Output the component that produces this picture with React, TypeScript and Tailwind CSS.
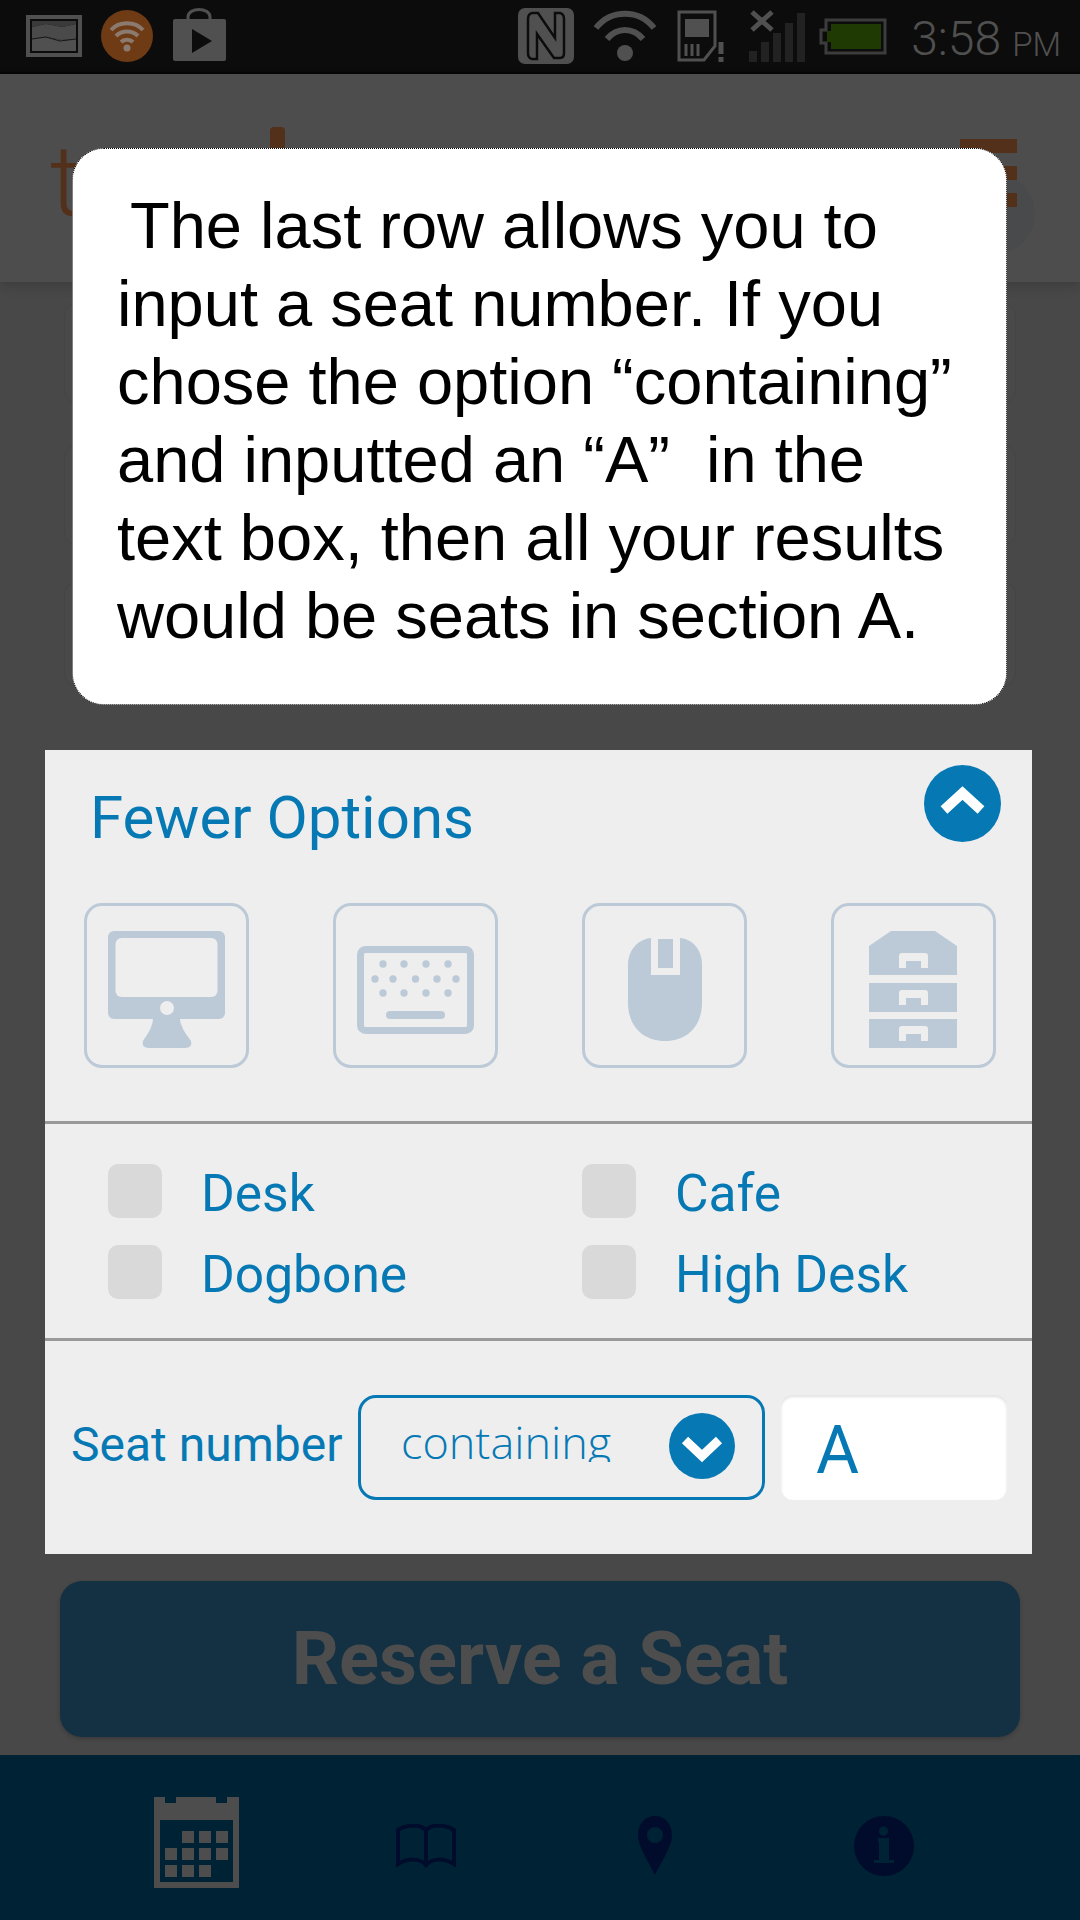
const ICON = "#bccad8";
const PANEL = "#eeeeee";
const NAV = "#002235";
const DARK = "#010c2c";
const GREY = "#505050";

function ChartIcon() {
  return (
    <svg width="56" height="42" viewBox="0 0 56 42">
      <rect x="2" y="2" width="52" height="38" fill="#0c0c0c" stroke={GREY} strokeWidth="4" />
      <path d="M6 6H50V9L36 12L20 9L6 12Z" fill="#3a3a3a" />
      <path d="M6 12L20 9L36 12L50 9V24L36 25L20 22L6 24Z" fill="#4a4a4a" />
      <path d="M6 24L20 22L36 25L50 24V36H6Z" fill={GREY} />
      <path d="M6 24L20 22L34 26L50 24" fill="none" stroke="#161616" strokeWidth="1" />
    </svg>
  );
}

function FeedIcon() {
  return (
    <svg width="52" height="52" viewBox="0 0 52 52">
      <circle cx="26" cy="26" r="26" fill="#6f3b14" />
      <g fill="none" stroke="#8a7a70" strokeWidth="4">
        <path d="M10 20C18 11 34 11 42 20" />
        <path d="M15 26C21 20 31 20 37 26" />
        <path d="M20 32C23 29 29 29 32 32" />
      </g>
      <circle cx="26" cy="38" r="3.5" fill="#8a7a70" />
    </svg>
  );
}

function BagIcon() {
  return (
    <svg width="55" height="54" viewBox="0 0 55 54">
      <path d="M16 14V10C16 0 38 0 38 10V14" fill="none" stroke={GREY} strokeWidth="3" />
      <rect x="1" y="12" width="53" height="42" rx="2" fill={GREY} />
      <path d="M20 22L40 34L20 46Z" fill="#0c0c0c" />
    </svg>
  );
}

function NfcIcon() {
  return (
    <svg width="56" height="56" viewBox="0 0 56 56">
      <rect width="56" height="56" rx="7" fill={GREY} />
      <path d="M14 5Q10 6 10 11V45Q10 50 14 51H19V26L36 50H42Q46 50 46 45V11Q46 6 42 5H37V30L20 5Z" fill="none" stroke="#0c0c0c" strokeWidth="2.5" />
    </svg>
  );
}

function WifiIcon() {
  return (
    <svg width="64" height="52" viewBox="0 0 64 52">
      <g fill="none" stroke={GREY} strokeWidth="6">
        <path d="M3 18C18 -1 46 -1 61 18" />
        <path d="M14 29C24 17 40 17 50 29" />
      </g>
      <circle cx="32" cy="43" r="8" fill={GREY} />
    </svg>
  );
}

function SimIcon() {
  return (
    <svg width="49" height="52" viewBox="0 0 49 52">
      <path d="M2 2H38V36L27 50H2Z" fill="none" stroke={GREY} strokeWidth="3" />
      <rect x="8" y="9" width="24" height="18" fill={GREY} />
      <path d="M9 34V46M15 34V46M21 34V46" stroke={GREY} strokeWidth="3" />
      <path d="M44 32V44M44 47V52" stroke={GREY} strokeWidth="5" />
    </svg>
  );
}

function SignalIcon() {
  return (
    <svg width="56" height="52" viewBox="0 0 56 52">
      <path d="M3 2L23 20M23 2L3 20" stroke={GREY} strokeWidth="5" />
      <rect x="0" y="41" width="8" height="11" fill="#222222" />
      <rect x="12" y="32" width="8" height="20" fill="#222222" />
      <rect x="24" y="23" width="8" height="29" fill="#222222" />
      <rect x="36" y="13" width="8" height="39" fill="#222222" />
      <rect x="48" y="3" width="8" height="49" fill="#222222" />
    </svg>
  );
}

function BatteryIcon() {
  return (
    <svg width="68" height="37" viewBox="0 0 68 37">
      <path d="M7 2H66V35H7V25H2V12H7Z" fill="#0c0c0c" stroke="#3c3c3c" strokeWidth="3" />
      <path d="M12 6H62V31H12V24H8V13H12Z" fill="#1f3a02" />
    </svg>
  );
}

function StatusBar() {
  return (
    <div className="h-[74px] shrink-0 border-b-2 border-[#060606] bg-[#0c0c0c] flex items-center justify-between pl-[26px] pr-[19px]">
      <div className="flex items-center gap-[19px]">
        <ChartIcon />
        <FeedIcon />
        <div className="-mt-[5px]">
          <BagIcon />
        </div>
      </div>
      <div className="flex items-center">
        <NfcIcon />
        <div className="ml-[19px]">
          <WifiIcon />
        </div>
        <div className="ml-[20px]">
          <SimIcon />
        </div>
        <div className="ml-[23px]">
          <SignalIcon />
        </div>
        <div className="ml-[14px]">
          <BatteryIcon />
        </div>
        <span className="ml-[24px] mt-[6px] w-[90px] text-[48px] leading-none font-light text-[#505050]">3:58</span>
        <span className="ml-[11px] mt-[16px] text-[33px] leading-none font-light text-[#505050]">PM</span>
      </div>
    </div>
  );
}

function Header() {
  return (
    <div className="relative z-10 h-[208px] shrink-0 bg-[#4d4d4d] shadow-[0_4px_12px_rgba(0,0,0,0.16)] overflow-hidden">
      <div className="flex items-start pl-[50px] pt-[53px]">
        <span className="mt-[6px] w-[220px] text-[98px] leading-[1] font-light text-[#52301a]">t</span>
        <div className="h-[120px] w-[15px] rounded-t-[4px] bg-[#52301a]" />
      </div>
      <div className="absolute left-[955px] top-[100px] h-[80px] w-[80px] rounded-full bg-[#494a4c]" />
      <div className="absolute left-[960px] top-[65px] flex w-[57px] flex-col gap-[13px]">
        <div className="h-[14px] bg-[#52301a]" />
        <div className="h-[14px] bg-[#52301a]" />
        <div className="h-[14px] bg-[#52301a]" />
      </div>
    </div>
  );
}

function MonitorGlyph() {
  return (
    <svg width="159" height="159" viewBox="2 3 159 159">
      <rect x="23" y="28" width="117" height="88" rx="6" fill={ICON} />
      <rect x="30.5" y="35" width="102" height="59" rx="6" fill={PANEL} />
      <circle cx="82" cy="105" r="7" fill={PANEL} />
      <path d="M68 116H95Q95 124 106 138Q108 145 100 145H64Q56 145 58 138Q68 124 68 116Z" fill={ICON} />
    </svg>
  );
}

function KeyboardGlyph() {
  const rows = [
    { y: 61, xs: [50, 71, 93, 115] },
    { y: 76, xs: [42, 60, 82.5, 104, 123] },
    { y: 90, xs: [50, 71, 93, 115] },
  ];
  return (
    <svg width="159" height="159" viewBox="3 3 159 159">
      <rect x="27.5" y="46.5" width="110" height="81" rx="5" fill={PANEL} stroke={ICON} strokeWidth="7" />
      {rows.map((row) => row.xs.map((x) => <circle key={`${x}-${row.y}`} cx={x} cy={row.y} r="3.7" fill={ICON} />))}
      <rect x="53" y="108" width="59" height="8" rx="4" fill={ICON} />
    </svg>
  );
}

function MouseGlyph() {
  return (
    <svg width="159" height="159" viewBox="1 3 159 159">
      <path d="M44 62C44 46 55 36 67 35H96C108 36 118 46 118 62V100C118 122 104 138 81 138C58 138 44 122 44 100Z" fill={ICON} />
      <rect x="67" y="30" width="29" height="42" fill={PANEL} />
      <rect x="74" y="36" width="15" height="29" fill={ICON} />
    </svg>
  );
}

function Handle({ y }: { y: number }) {
  return (
    <path d={`M67 ${y + 15}V${y + 3}Q67 ${y} 70 ${y}H93Q96 ${y} 96 ${y + 3}V${y + 15}H89V${y + 8}H74V${y + 15}Z`} fill={PANEL} />
  );
}

function CabinetGlyph() {
  return (
    <svg width="159" height="159" viewBox="2 3 159 159">
      <path d="M59 28H103L125 43V72H37V43Z" fill={ICON} />
      <rect x="37" y="80" width="88" height="29" fill={ICON} />
      <rect x="37" y="116" width="88" height="29" fill={ICON} />
      <Handle y={50} />
      <Handle y={87} />
      <Handle y={123} />
    </svg>
  );
}

function Tile({ children }: { children: React.ReactNode }) {
  return (
    <div className="h-[165px] w-[165px] rounded-[18px] border-[3px] border-[#bccad8]">
      {children}
    </div>
  );
}

function CheckRow({ label }: { label: string }) {
  return (
    <div className="flex h-[54px] items-start">
      <div className="h-[54px] w-[54px] rounded-[10px] bg-[#d9d9d9]" />
      <span className="ml-[39px] mt-[3px] text-[51.5px] leading-[54px] text-[#0679b5]">{label}</span>
    </div>
  );
}

function OptionsPanel() {
  return (
    <div className="ml-[45px] mr-[48px] h-[804px] bg-[#eeeeee]">
      <div className="h-[371px]">
        <div className="flex h-[153px] items-start justify-between pl-[45px] pr-[31px]">
          <span className="mt-[38px] text-[60px] leading-none text-[#0679b5]">Fewer Options</span>
          <div className="mt-[15px] h-[77px] w-[77px] rounded-full bg-[#0679b5]">
            <svg width="77" height="77" viewBox="0 0 77 77">
              <polyline points="20,45 38.5,28 57,45" fill="none" stroke="#fff" strokeWidth="10" />
            </svg>
          </div>
        </div>
        <div className="ml-[39px] mr-[36px] flex justify-between">
          <Tile><MonitorGlyph /></Tile>
          <Tile><KeyboardGlyph /></Tile>
          <Tile><MouseGlyph /></Tile>
          <Tile><CabinetGlyph /></Tile>
        </div>
      </div>

      <div className="h-[217px] border-t-[3px] border-[#999999] pl-[63px] pt-[40px]">
        <div className="grid grid-cols-[474px_1fr] gap-y-[27px]">
          <CheckRow label="Desk" />
          <CheckRow label="Cafe" />
          <CheckRow label="Dogbone" />
          <CheckRow label="High Desk" />
        </div>
      </div>

      <div className="h-[216px] border-t-[3px] border-[#999999] pt-[54px] flex items-start pl-[26px]">
        <span className="h-[105px] w-[287px] text-[48px] leading-[100px] text-[#0679b5]">Seat number</span>
        <div className="flex h-[105px] w-[407px] items-start justify-between rounded-[18px] border-[3px] border-[#0679b5] pl-[40px] pr-[27px]">
          <div className="mt-[22px] h-[42px] overflow-hidden">
            <span className="block font-['Open_Sans',sans-serif] text-[45px] font-light leading-[43px] text-[#0679b5]">containing</span>
          </div>
          <div className="mt-[15px] h-[66px] w-[66px] rounded-full bg-[#0679b5]">
            <svg width="66" height="66" viewBox="0 0 66 66">
              <polyline points="16,27 33,43 50,27" fill="none" stroke="#fff" strokeWidth="9" />
            </svg>
          </div>
        </div>
        <div className="ml-[16px] h-[105px] w-[226px] rounded-[12px] bg-white pl-[35px] shadow-[inset_0_2px_3px_rgba(0,0,0,0.12)] text-[66px] leading-[111px] text-[#0679b5]">
          A
        </div>
      </div>
    </div>
  );
}

function CalendarIcon() {
  return (
    <svg width="85" height="91" viewBox="0 0 85 91">
      <path d="M0 0H11V6H22V0H62V6H73V0H85V91H0Z" fill="#4d4d4d" />
      <rect x="6" y="23" width="73" height="62" fill={NAV} />
      {[
        [28, 34], [45, 34], [62, 34],
        [11, 51], [28, 51], [45, 51], [62, 51],
        [11, 68], [28, 68], [45, 68],
      ].map(([x, y]) => (
        <rect key={`${x}-${y}`} x={x} y={y} width="12" height="12" fill="#4d4d4d" />
      ))}
    </svg>
  );
}

function BookIcon() {
  return (
    <svg width="60" height="44" viewBox="0 0 60 44">
      <path d="M2 6C12 0 24 0 30 6C36 0 48 0 58 6V40C48 34 36 34 30 41C24 34 12 34 2 40ZM30 6V41" fill="none" stroke={DARK} strokeWidth="4" />
    </svg>
  );
}

function PinIcon() {
  return (
    <svg width="34" height="59" viewBox="0 0 34 59">
      <path d="M17 0C7 0 0 8 0 19C0 31 12 48 17 59C22 48 34 31 34 19C34 8 27 0 17 0Z" fill={DARK} />
      <circle cx="17" cy="19" r="8" fill={NAV} />
    </svg>
  );
}

function InfoIcon() {
  return (
    <svg width="60" height="60" viewBox="0 0 60 60">
      <circle cx="30" cy="30" r="30" fill={DARK} />
      <circle cx="29.5" cy="15" r="4.5" fill={NAV} />
      <path d="M24 22H35V44H40V47H20V44H25V26H24Z" fill={NAV} />
    </svg>
  );
}

function Ghost({ className }: { className: string }) {
  return <div className={`mx-[64px] rounded-[14px] border border-[#444444] bg-[#494949] ${className}`} />;
}

export default function App() {
  return (
    <div className="relative flex h-[1920px] w-[1080px] flex-col overflow-hidden bg-[#484848] font-['Roboto',sans-serif]">
      <StatusBar />
      <Header />

      <div className="flex-1">
        <Ghost className="mt-[20px] h-[102px]" />
        <Ghost className="mt-[40px] h-[102px]" />
        <Ghost className="mt-[35px] h-[106px]" />
        <div className="mt-[63px]">
          <OptionsPanel />
        </div>
        <div className="mx-[60px] mt-[27px] flex h-[156px] items-center justify-center rounded-[22px] bg-[#133143] shadow-[0_2px_4px_rgba(0,0,0,0.2)]">
          <span className="text-[74px] font-bold leading-none text-[#4d4d4d]">Reserve a Seat</span>
        </div>
      </div>

      <div className="grid h-[165px] shrink-0 grid-cols-4 items-center justify-items-center bg-[#002235] px-[82px]">
        <div className="mt-[9px]"><CalendarIcon /></div>
        <div className="mt-[16px]"><BookIcon /></div>
        <div className="mt-[16px]"><PinIcon /></div>
        <div className="mt-[16px]"><InfoIcon /></div>
      </div>

      {/* tutorial popup over the dimmed page */}
      <div className="absolute left-[72px] top-[148px] z-20 h-[557px] w-[935px] rounded-[32px] border border-dotted border-black bg-white pl-[44px] pt-[38px] font-['Liberation_Sans',sans-serif] text-[65px] leading-[78px] text-black">
        <div className="ml-[13px] whitespace-pre">The last row allows you to</div>
        <div className="whitespace-pre">input a seat number. If you</div>
        <div className="whitespace-pre">chose the option “containing”</div>
        <div className="whitespace-pre">{"and inputted an “A”  in the"}</div>
        <div className="whitespace-pre">text box, then all your results</div>
        <div className="whitespace-pre">would be seats in section A.</div>
      </div>
    </div>
  );
}
